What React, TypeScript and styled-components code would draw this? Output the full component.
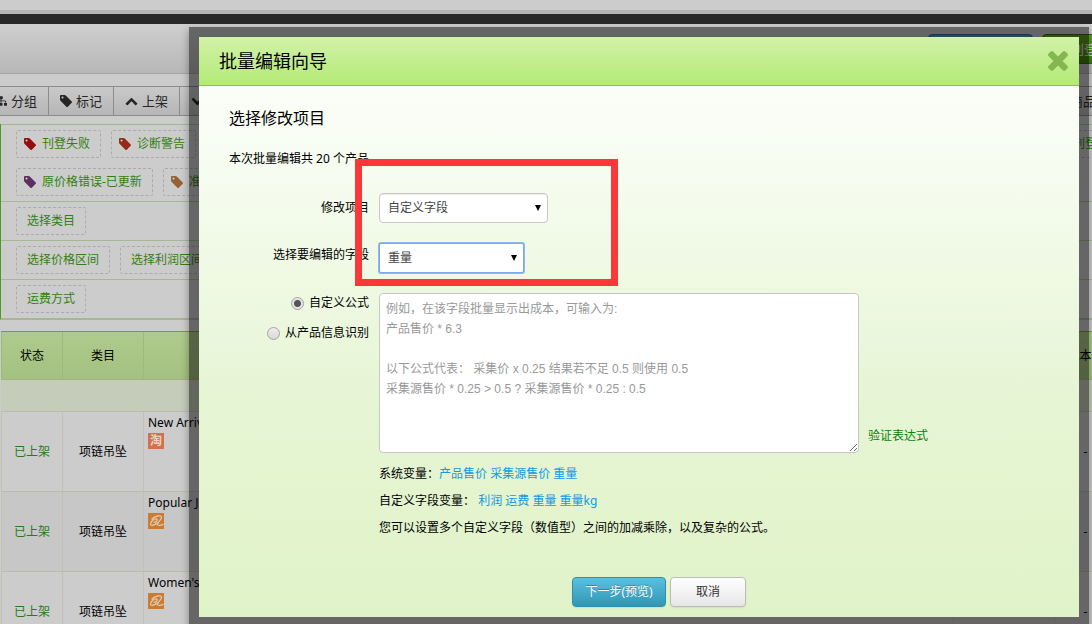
import React from "react";
import styled, { createGlobalStyle, css } from "styled-components";
import { FaSitemap } from "react-icons/fa";

const GlobalStyle = createGlobalStyle`
  * { box-sizing: border-box; }
  body {
    margin: 0;
    background: #ccc;
    color: #000;
    font: 12px/20px "Noto Sans", "Noto Sans CJK SC", sans-serif;
  }
  button, select, input, textarea { font: inherit; margin: 0; }
  a { text-decoration: none; }
  h2, h3, p { margin: 0; font-weight: normal; }
`;

/* ---------- icons ---------- */

const Icon = styled.svg<{ $size: number }>`
  width: ${(p) => p.$size}px;
  height: ${(p) => p.$size}px;
  fill: currentColor;
  flex: none;
`;

const TagIcon = () => (
  <Icon $size={12} viewBox="128 128 1515 1515" aria-hidden>
    <path d="M576 448q0-53-37.5-90.5t-90.5-37.5-90.5 37.5-37.5 90.5 37.5 90.5 90.5 37.5 90.5-37.5 37.5-90.5zm1067 576q0 53-37 90l-491 492q-39 37-91 37-53 0-90-37l-715-716q-38-37-64.5-101t-26.5-117v-416q0-52 38-90t90-38h416q53 0 117 26.5t102 64.5l715 714q37 39 37 91z" />
  </Icon>
);

const ChevronIcon = ({ down = false }: { down?: boolean }) => (
  <Icon $size={13} viewBox="90 90 1612 1792" aria-hidden>
    <path
      transform={down ? "rotate(180 896 1000)" : undefined}
      d="M1683 1331l-166 165q-19 19-45 19t-45-19l-531-531-531 531q-19 19-45 19t-45-19l-166-165q-19-19-19-45.5t19-45.5l742-741q19-19 45-19t45 19l742 741q19 19 19 45.5t-19 45.5z"
    />
  </Icon>
);

const CloseIcon = () => (
  <Icon $size={20} viewBox="302 366 1188 1188" aria-hidden>
    <path d="M1490 1322q0 40-28 68l-136 136q-28 28-68 28t-68-28l-294-294-294 294q-28 28-68 28t-68-28l-136-136q-28-28-28-68t28-68l294-294-294-294q-28-28-28-68t28-68l136-136q28-28 68-28t68 28l294 294 294-294q28-28 68-28t68 28l136 136q28 28 28 68t-28 68l-294 294 294 294q28 28 28 68z" />
  </Icon>
);

const AlibabaIcon = () => (
  <Icon $size={16} viewBox="0 0 16 16" aria-hidden>
    <rect width="16" height="16" fill="#cf7a2c" />
    <path
      d="M6 9.200C8.500 9 10 6.800 8.500 6 6.200 5.400 2 9 2.600 11.400c.6 1.800 5 .4 6.400-1.400M4 6C7 3 13 1.600 13.600 4.200c.3 2-3.600 4.800-4.200 6.800-.4 1.800 3.200 1.800 5.600.4"
      fill="none"
      stroke="#dccbb4"
      strokeWidth="1.300"
      strokeLinecap="round"
    />
  </Icon>
);

/* ---------- page behind the dialog ---------- */

const Page = styled.div`
  position: relative;
  height: 100vh;
  overflow: hidden;
`;

const TopStrip = styled.div`
  height: 24px;
  border-bottom: 10px solid #282828;
  background: linear-gradient(#ccc 10px, #b5b5b5 10px);
`;

const HeaderBar = styled.header`
  display: flex;
  justify-content: flex-end;
  gap: 9px;
  height: 50px;
  padding-top: 10px;
  margin-right: -34px;
  border-bottom: 1px solid #a6a6a6;
  background: linear-gradient(#cfcfcf, #b7b7b7);
`;

const HeaderButton = styled.button<{ $green?: boolean }>`
  width: ${(p) => (p.$green ? 84 : 105)}px;
  height: 30px;
  padding: 0;
  border: 1px solid ${(p) => (p.$green ? "#346708" : "#28718b")};
  border-radius: 4px;
  background: ${(p) =>
    p.$green ? "linear-gradient(#5f9f22, #3f7d08)" : "linear-gradient(#4697b2, #27758f)"};
  color: #ddd;
  font-size: 13px;
`;

const Toolbar = styled.nav`
  display: flex;
  height: 30px;
  margin: 12px -16px 8px -17px;
  overflow: hidden;
`;

const ToolButton = styled.button<{ $last?: boolean }>`
  display: flex;
  align-items: center;
  gap: 4px;
  padding: 0 11px;
  border: solid #8c8c8c;
  border-width: 1px 0 1px 1px;
  background: linear-gradient(#c9c9c9, #b6b6b6);
  color: #262626;
  font-size: 13px;
  ${(p) =>
    p.$last &&
    css`
      margin-left: auto;
      border-right-width: 1px;
    `}
`;

const Filters = styled.section`
  border-left: 1px solid #4a9c1c;
  border-bottom: 2px solid #a7b796;
`;

const FilterGroup = styled.div`
  display: flex;
  flex-direction: column;
  gap: 10px;
  padding: 5px 0 5px 15px;
  border-top: 1px solid #a7b796;
`;

const FilterLine = styled.div`
  display: flex;
  gap: 10px;
  margin-right: -40px;
`;

const Chip = styled.a<{ $tag?: string }>`
  display: flex;
  align-items: center;
  gap: 6px;
  height: 28px;
  padding: ${(p) => (p.$tag ? "0 10px 0 7px" : "0 10px")};
  border: 1px dashed #ababab;
  border-radius: 2px;
  color: #33800f;
  white-space: nowrap;
  &:nth-child(3) { margin-left: auto; }
  svg { color: ${(p) => p.$tag}; }
`;

const TableArea = styled.div`
  margin: 11px -24px 0 1px;
  border-top: 1px solid #76984f;
`;

const ProductTable = styled.table`
  width: 100%;
  table-layout: fixed;
  border-collapse: separate;
  border-spacing: 0;
  th, td {
    padding: 0;
    border-left: 1px solid #bfc3b4;
    text-align: center;
    font-weight: normal;
  }
  th {
    height: 48px;
    border-color: #9dba78;
    border-bottom: 1px solid #9db87b;
    background: linear-gradient(#aecb8d, #a5c181);
  }
`;

const SpacerRow = styled.tr`
  td {
    height: 31px;
    border-left: 0;
    background: #c5ccba;
  }
`;

const ProductRow = styled.tr`
  &:nth-child(odd) td { background: #c7c7c7; }
  td {
    height: 80px;
    border-top: 1px solid #b9bdb0;
  }
`;

const Status = styled.span`
  color: #2a7a17;
`;

const ProductCell = styled.div`
  display: flex;
  flex-direction: column;
  height: 79px;
  padding: 1px 4px;
  text-align: left;
`;

const TaobaoMark = styled.span`
  width: 16px;
  height: 16px;
  background: #d5704a;
  color: #ead2c8;
  font-size: 12px;
  font-weight: bold;
  line-height: 16px;
  text-align: center;
`;

/* ---------- dialog ---------- */

const Overlay = styled.div`
  position: absolute;
  inset: 0;
  padding: 27px 3px 0 189px;
`;

const Frame = styled.div`
  padding: 10px;
  background: rgba(0, 0, 0, 0.5);
  box-shadow: 0 3px 8px rgba(0, 0, 0, 0.35);
`;

const DialogHeader = styled.div`
  display: flex;
  align-items: center;
  justify-content: space-between;
  height: 49px;
  padding: 0 11px 0 20px;
  border-bottom: 1px solid #8cc65a;
  background: linear-gradient(#d1f2a8, #b4ea76);
`;

const DialogTitle = styled.h2`
  font-size: 18px;
`;

const CloseButton = styled.button`
  display: flex;
  padding: 0;
  border: 0;
  background: none;
  color: #86b650;
`;

const DialogBody = styled.div`
  position: relative;
  padding: 20px 0 10px 30px;
  background: linear-gradient(#fcfef9, #f1fae7 30%, #e6f5d4 60%, #e0f3c8);
`;

const Heading = styled.h3`
  font-size: 16px;
  line-height: 24px;
`;

const Summary = styled.p`
  margin: 19px 0 24px;
`;

const Form = styled.form`
  display: grid;
  grid-template-columns: 140px 1fr;
  gap: 20px 10px;
`;

const FieldLabel = styled.label<{ $line: number }>`
  line-height: ${(p) => p.$line}px;
  text-align: right;
`;

const SelectBox = styled.div<{ $width: number }>`
  position: relative;
  width: ${(p) => p.$width}px;
  svg {
    position: absolute;
    right: 6px;
    top: 11px;
    pointer-events: none;
  }
`;

const Select = styled.select<{ $active?: boolean }>`
  display: block;
  width: 100%;
  height: 30px;
  padding: 0 20px 0 8px;
  appearance: none;
  border: 1px solid ${(p) => (p.$active ? "#7da9e8" : "#c8c8c8")};
  border-radius: ${(p) => (p.$active ? 2 : 4)}px;
  background: #fff;
  box-shadow: ${(p) =>
    p.$active ? "0 0 0 1px #8fb6ee" : "inset 0 1px 1px rgba(0, 0, 0, 0.08)"};
  color: #444;
`;

const Radios = styled.div`
  display: flex;
  flex-direction: column;
  align-items: flex-end;
  gap: 10px;
`;

const RadioLabel = styled.label`
  display: flex;
  align-items: center;
  gap: 5px;
`;

const Radio = styled.input`
  width: 13px;
  height: 13px;
  appearance: none;
  border: 1px solid #a4a4a4;
  border-radius: 50%;
  background: linear-gradient(#eee, #d8d8d8);
  &:checked {
    background: radial-gradient(#555 3px, #e4e4e4 4px);
  }
`;

const Editor = styled.div`
  display: flex;
  align-items: flex-end;
  gap: 9px;
`;

const Formula = styled.textarea`
  width: 480px;
  height: 160px;
  padding: 5px 6px;
  border: 1px solid #c8c8c8;
  border-radius: 4px;
  outline: 0;
  background: #fff;
  font-family: "Liberation Sans", "Noto Sans CJK SC", sans-serif;
  line-height: 20px;
  &::placeholder { color: #999; }
`;

const Verify = styled.a`
  padding-bottom: 7px;
  color: #078307;
`;

const Notes = styled.div`
  margin: 7px 0 36px 150px;
  line-height: 27px;
  a { color: #1199e8; }
`;

const Actions = styled.div`
  display: flex;
  justify-content: center;
  gap: 4px;
  padding-left: 10px;
`;

const ActionButton = styled.button<{ $primary?: boolean }>`
  width: ${(p) => (p.$primary ? 94 : 76)}px;
  height: 30px;
  padding: 0;
  border: 1px solid ${(p) => (p.$primary ? "#2f8fae" : "#bbb")};
  border-radius: 4px;
  background: ${(p) =>
    p.$primary ? "linear-gradient(#5bc0de, #2f96b4)" : "linear-gradient(#fff, #e6e6e6)"};
  box-shadow: 0 1px 2px rgba(0, 0, 0, 0.08);
  color: ${(p) => (p.$primary ? "#fff" : "#333")};
  text-shadow: ${(p) => (p.$primary ? "0 -1px 0 rgba(0, 0, 0, 0.25)" : "none")};
`;

const Highlight = styled.div`
  position: absolute;
  left: 156px;
  top: 73px;
  width: 263px;
  height: 127px;
  border: 7px solid #fb3838;
  pointer-events: none;
`;

const Arrow = () => (
  <Icon $size={8} viewBox="0 0 8 8" aria-hidden>
    <path d="M1 1h6L4 7z" fill="#000" />
  </Icon>
);

const products = [
  { title: "New Arrival", source: "taobao" },
  { title: "Popular Jewelry", source: "alibaba" },
  { title: "Women's", source: "alibaba" },
];

const hint = [
  "例如，在该字段批量显示出成本，可输入为:",
  "产品售价 * 6.3",
  "",
  "以下公式代表： 采集价 x 0.25 结果若不足 0.5 则使用 0.5",
  "采集源售价 * 0.25 > 0.5 ? 采集源售价 * 0.25 : 0.5",
].join("\n");

const Listing = () => (
  <>
    <TopStrip />
    <HeaderBar>
      <HeaderButton aria-label="同步" />
      <HeaderButton $green>刊登</HeaderButton>
    </HeaderBar>
    <Toolbar>
      <ToolButton><FaSitemap size={12} />分组</ToolButton>
      <ToolButton><TagIcon />标记</ToolButton>
      <ToolButton><ChevronIcon />上架</ToolButton>
      <ToolButton><ChevronIcon down />下架</ToolButton>
      <ToolButton $last>商品</ToolButton>
    </Toolbar>
    <Filters>
      <FilterGroup>
        <FilterLine>
          <Chip href="#" $tag="#970c0c"><TagIcon />刊登失败</Chip>
          <Chip href="#" $tag="#962a16"><TagIcon />诊断警告</Chip>
          <Chip href="#" $tag="#970c0c"><TagIcon />刊登成功</Chip>
        </FilterLine>
        <FilterLine>
          <Chip href="#" $tag="#5c2f60"><TagIcon />原价格错误-已更新</Chip>
          <Chip href="#" $tag="#966235"><TagIcon />准备</Chip>
        </FilterLine>
      </FilterGroup>
      <FilterGroup>
        <FilterLine><Chip href="#">选择类目</Chip></FilterLine>
      </FilterGroup>
      <FilterGroup>
        <FilterLine>
          <Chip href="#">选择价格区间</Chip>
          <Chip href="#">选择利润区间</Chip>
        </FilterLine>
      </FilterGroup>
      <FilterGroup>
        <FilterLine><Chip href="#">运费方式</Chip></FilterLine>
      </FilterGroup>
    </Filters>
    <TableArea>
      <ProductTable>
        <colgroup>
          <col width="61" />
          <col width="81" />
          <col />
          <col width="101" />
          <col width="62" />
        </colgroup>
        <thead>
          <tr><th>状态</th><th>类目</th><th /><th /><th>成本价</th></tr>
        </thead>
        <tbody>
          <SpacerRow><td colSpan={5} /></SpacerRow>
          {products.map((p) => (
            <ProductRow key={p.title}>
              <td><Status>已上架</Status></td>
              <td>项链吊坠</td>
              <td>
                <ProductCell>
                  {p.title}
                  {p.source === "taobao" ? <TaobaoMark>淘</TaobaoMark> : <AlibabaIcon />}
                </ProductCell>
              </td>
              <td />
              <td>-</td>
            </ProductRow>
          ))}
        </tbody>
      </ProductTable>
    </TableArea>
  </>
);

export default function App() {
  return (
    <>
      <GlobalStyle />
      <Page>
        <Listing />
        <Overlay>
          <Frame role="dialog" aria-labelledby="wizard-title">
            <DialogHeader>
              <DialogTitle id="wizard-title">批量编辑向导</DialogTitle>
              <CloseButton aria-label="关闭"><CloseIcon /></CloseButton>
            </DialogHeader>
            <DialogBody>
              <Heading>选择修改项目</Heading>
              <Summary>本次批量编辑共 20 个产品</Summary>
              <Form>
                <FieldLabel htmlFor="item" $line={30}>修改项目</FieldLabel>
                <SelectBox $width={169}>
                  <Select id="item"><option>自定义字段</option></Select>
                  <Arrow />
                </SelectBox>
                <FieldLabel htmlFor="field" $line={24}>选择要编辑的字段</FieldLabel>
                <SelectBox $width={145}>
                  <Select id="field" $active><option>重量</option></Select>
                  <Arrow />
                </SelectBox>
                <Radios>
                  <RadioLabel><Radio type="radio" name="mode" defaultChecked />自定义公式</RadioLabel>
                  <RadioLabel><Radio type="radio" name="mode" />从产品信息识别</RadioLabel>
                </Radios>
                <Editor>
                  <Formula aria-label="自定义公式" placeholder={hint} />
                  <Verify href="#">验证表达式</Verify>
                </Editor>
              </Form>
              <Notes>
                <p>系统变量：<a href="#">产品售价</a> <a href="#">采集源售价</a> <a href="#">重量</a></p>
                <p>自定义字段变量： <a href="#">利润</a> <a href="#">运费</a> <a href="#">重量</a> <a href="#">重量kg</a></p>
                <p>您可以设置多个自定义字段（数值型）之间的加减乘除，以及复杂的公式。</p>
              </Notes>
              <Actions>
                <ActionButton $primary>下一步(预览)</ActionButton>
                <ActionButton>取消</ActionButton>
              </Actions>
              <Highlight />
            </DialogBody>
          </Frame>
        </Overlay>
      </Page>
    </>
  );
}
